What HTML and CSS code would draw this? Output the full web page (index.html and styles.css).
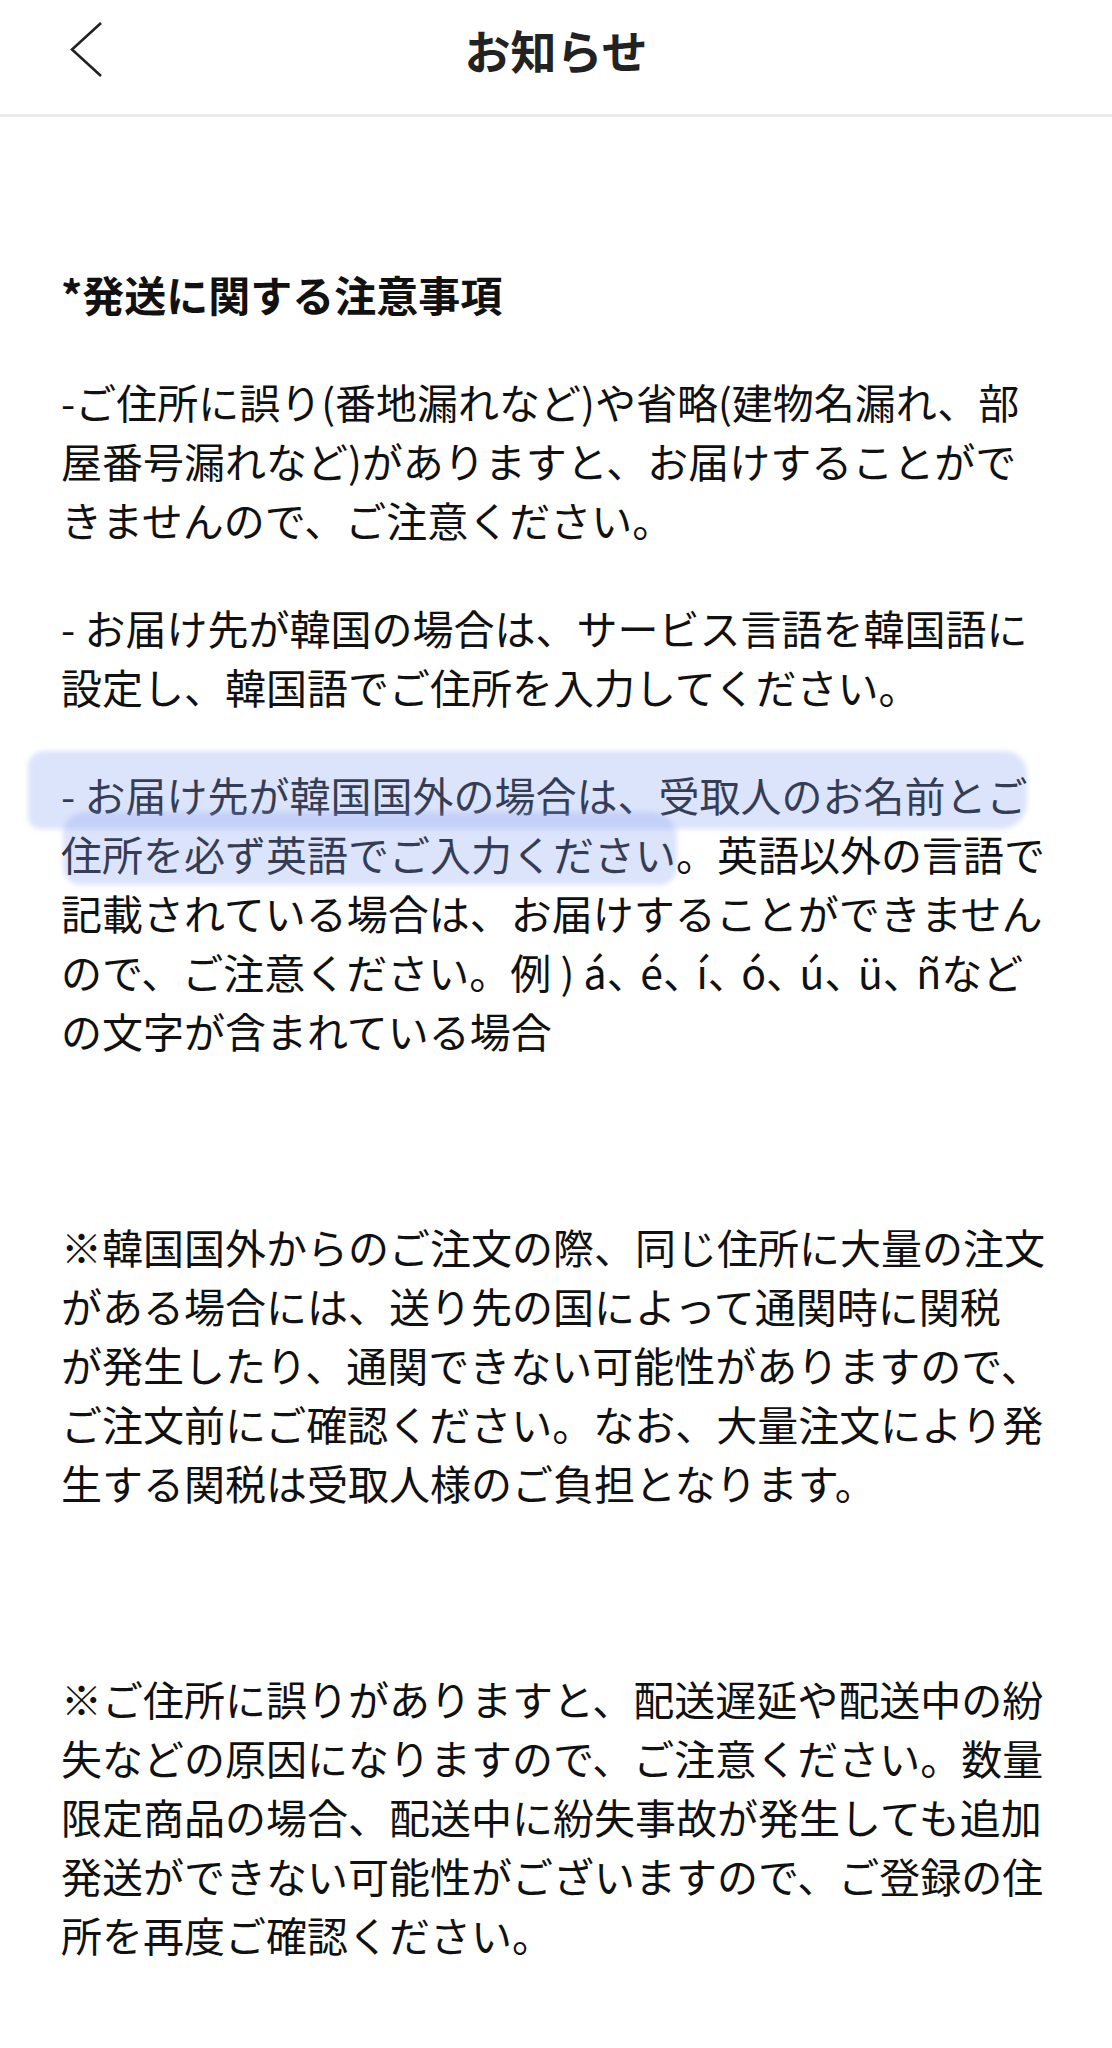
FILE: index.html
```html
<!DOCTYPE html>
<html lang="ja">
<head>
<meta charset="utf-8">
<title>お知らせ</title>
<link rel="stylesheet" href="styles.css">
</head>
<body>
<header class="topbar">
  <div class="topbar-left">
    <svg class="back-icon" width="36" height="58" viewBox="0 0 36 58" aria-hidden="true">
      <path d="M31 3 L2 29.5 L31 56" fill="none" stroke="#222" stroke-width="2.6" stroke-linejoin="miter"/>
    </svg>
  </div>
  <h1 class="topbar-title">お知らせ</h1>
  <div class="topbar-right"></div>
</header>
<main class="content">
  <h2 class="notice-heading">*発送に関する注意事項</h2>
  <p class="notice-text">-ご住所に誤り(番地漏れなど)や省略(建物名漏れ、部<br>屋番号漏れなど)がありますと、お届けすることがで<br>きませんので、ご注意ください。</p>
  <p class="notice-text">- お届け先が韓国の場合は、サービス言語を韓国語に<br>設定し、韓国語でご住所を入力してください。</p>
  <p class="notice-text marked">
    <span class="marker marker-one"></span>
    <span class="marker marker-two"></span>
    - お届け先が韓国国外の場合は、受取人のお名前とご<br>住所を必ず英語でご入力ください。英語以外の言語で<br>記載されている場合は、お届けすることができません<br>ので、ご注意ください。例 ) <span class="latin-list">á<span class="jp-comma">、</span>é<span class="jp-comma">、</span>í<span class="jp-comma">、</span>ó<span class="jp-comma">、</span>ú<span class="jp-comma">、</span>ü<span class="jp-comma">、</span>ñ</span>など<br>の文字が含まれている場合</p>
  <p class="notice-text notice-block">※韓国国外からのご注文の際、同じ住所に大量の注文<br>がある場合には、送り先の国によって通関時に関税<br>が発生したり、通関できない可能性がありますので、<br>ご注文前にご確認ください。なお、大量注文により発<br>生する関税は受取人様のご負担となります。</p>
  <p class="notice-text notice-block">※ご住所に誤りがありますと、配送遅延や配送中の紛<br>失などの原因になりますので、ご注意ください。数量<br>限定商品の場合、配送中に紛失事故が発生しても追加<br>発送ができない可能性がございますので、ご登録の住<br>所を再度ご確認ください。</p>
</main>
</body>
</html>
```

FILE: styles.css
```css
html, body {
  margin: 0;
  padding: 0;
  background: #ffffff;
}

body {
  font-family: "Noto Sans CJK JP", "Noto Sans", "Liberation Sans", sans-serif;
  color: #111111;
}

.topbar {
  display: grid;
  grid-template-columns: 1fr auto 1fr;
  align-items: start;
  height: 94px;
  padding-top: 20px;
  border-bottom: 3px solid #ebebeb;
}

.topbar-left {
  display: flex;
  align-items: center;
  height: 58px;
  padding-left: 70px;
}

.back-icon {
  display: block;
}

.topbar-title {
  margin: 0;
  font-size: 46px;
  line-height: 58px;
  font-weight: 700;
  color: #222222;
  letter-spacing: 0;
}

.content {
  padding: 147px 40px 60px 61px;
}

.notice-heading {
  margin: 0;
  font-size: 42px;
  line-height: 59px;
  font-weight: 700;
  color: #111111;
}

.notice-text {
  margin: 49px 0 0;
  font-size: 41px;
  line-height: 59px;
  font-weight: 400;
  color: #111111;
}

.notice-block {
  margin-top: 157px;
}

.latin-list {
  font-feature-settings: "halt" 1;
}

.jp-comma {
  margin-right: 13px;
}

.marked {
  position: relative;
}

.marker {
  position: absolute;
  display: block;
  background: rgba(138, 165, 241, 0.3);
  filter: blur(2.5px);
  pointer-events: none;
}

.marker-one {
  left: -33px;
  top: -14px;
  width: 999px;
  height: 78px;
  border-radius: 16px 22px 26px 12px;
}

.marker-two {
  left: 2px;
  top: 47px;
  width: 614px;
  height: 73px;
  border-radius: 22px 26px 18px 18px;
}
```
